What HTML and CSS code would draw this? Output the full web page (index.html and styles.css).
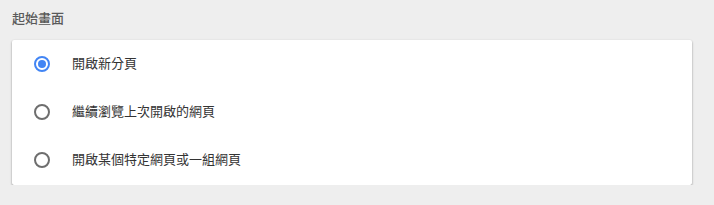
FILE: index.html
```html
<!DOCTYPE html>
<html lang="zh-Hant">
<head>
<meta charset="utf-8">
<link rel="stylesheet" href="styles.css">
</head>
<body>
<div class="page">
  <h2 class="section-title">起始畫面</h2>
  <div class="card">
    <label class="row">
      <span class="radio checked"></span>
      <span class="label">開啟新分頁</span>
    </label>
    <label class="row">
      <span class="radio"></span>
      <span class="label">繼續瀏覽上次開啟的網頁</span>
    </label>
    <label class="row">
      <span class="radio"></span>
      <span class="label">開啟某個特定網頁或一組網頁</span>
    </label>
  </div>
</div>
</body>
</html>
```
FILE: styles.css
```css
html, body {
  margin: 0;
  padding: 0;
  background: #eeeeee;
}
body {
  font-family: "Roboto", "Noto Sans CJK TC", sans-serif;
  font-size: 13px;
}
.page {
  padding: 0 22px 0 12px;
}
.section-title {
  margin: 0;
  height: 40px;
  box-sizing: border-box;
  padding-top: 9px;
  line-height: 20px;
  font-size: 13px;
  font-weight: 500;
  color: #5a5a5a;
}
.card {
  background: #fff;
  border-radius: 2px;
  box-shadow: 0 1px 2px rgba(0, 0, 0, 0.35), 0 1px 3px rgba(0, 0, 0, 0.1);
  height: 145px;
}
.row {
  display: flex;
  align-items: center;
  height: 48px;
  padding-left: 22px;
}
.radio {
  box-sizing: border-box;
  width: 16px;
  height: 16px;
  border-radius: 50%;
  border: 2px solid #6e6e6e;
  display: flex;
  align-items: center;
  justify-content: center;
  margin-right: 22px;
}
.radio.checked {
  border-color: #4285f4;
}
.radio.checked::after {
  content: "";
  width: 8px;
  height: 8px;
  border-radius: 50%;
  background: #4285f4;
}
.label {
  color: #333333;
  line-height: 20px;
}
```
